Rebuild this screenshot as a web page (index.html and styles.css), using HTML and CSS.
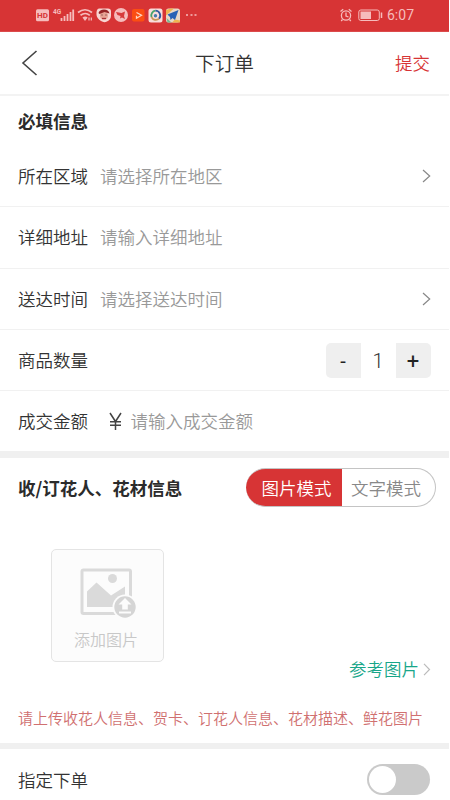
FILE: index.html
```
<!DOCTYPE html>
<html lang="zh-CN">
<head>
<meta charset="utf-8">
<title>下订单</title>
<link rel="stylesheet" href="styles.css">
</head>
<body>
<div class="status">
  <svg class="status-left" width="175" height="31" viewBox="0 0 175 31" fill="none" stroke="#f6bcbc">
    <rect x="11" y="9.200" width="13" height="12" rx="1.500" fill="#f6bcbc" stroke="none"/>
    <text x="12" y="18.300" class="hd">HD</text>
    <text x="28" y="13.500" class="net">4G</text>
    <path d="M36.500 21v-3M39.500 21v-5M42.500 21v-7M45.500 21v-9M48.200 21V9.500" stroke-width="1.800"/>
    <path d="M53 12.500q7-5.500 14 0M55.500 15.300q4.800-3.600 9.300 0" stroke-width="1.700"/>
    <path d="M57.500 17.500q2.700-2 5.200 0L60 21z" fill="#f6bcbc" stroke="none"/>
    <path d="M64 17.500v3M66.300 17.500v3" stroke-width="1.200"/>
    <path d="M74 8.500h9q3 0 3 3v4q0 4-4 6-3 1.500-6-.500-4-2.500-4.500-6-.500-6 2.500-6.500" fill="#f8d5d2" stroke="none"/>
    <circle cx="79" cy="15.500" r="4" fill="#e8a394" stroke="none"/>
    <path d="M73.500 13q1-3.500 5.500-3.500t5.500 4l-5-1.500-5 2z" fill="#952426" stroke="none"/>
    <path d="M76.500 15h1M80.500 15h1" stroke="#51282a"/><path d="M77 18.500h4" stroke="#a93235" stroke-width="1.300"/>
    <circle cx="96" cy="15" r="7" fill="#f6bcbc" stroke="none"/>
    <path d="M91 12l5.500 1 3.500-1.500-1 4.500 1 3-3-1.500-2 1 .500-2.500-3-1z" fill="#d73a3b" stroke="none"/>
    <rect x="107" y="9" width="12.500" height="12.500" rx="2" fill="#fb4e12" stroke="none"/>
    <path d="M111.500 12.500l5 2.700-5 3v-2.500" stroke="#ffd5c4" stroke-width="1.300"/>
    <rect x="123.500" y="8.500" width="14" height="14" rx="2.500" fill="#f9dcda" stroke="none"/>
    <path d="M126.500 17A4.800 4.800 0 0 1 130.500 10.700" stroke="#45a36a" stroke-width="1.800"/>
    <path d="M130.500 10.700a4.800 4.800 0 0 1 3.500 8" stroke="#315aa0" stroke-width="1.800"/>
    <path d="M134 18.700a4.800 4.800 0 0 1-7.500-1.500" stroke="#c79555" stroke-width="1.800"/>
    <circle cx="130.500" cy="15.700" r="1.700" fill="#427bab" stroke="none"/>
    <rect x="141" y="8.500" width="14" height="14" rx="2.500" fill="#e7d7c8" stroke="none"/>
    <path d="M141 10l5-1.500h3l-8 7zM147 22.500l3-3 5 1v2z" fill="#efb44f" stroke="none"/>
    <path d="M141.500 18l5 4.500h-4z" fill="#79b991" stroke="none"/>
    <path d="M142.500 14.500l11-4.500-3.500 10-2.500-2-2 2-.500-3z" fill="#2861b5" stroke="none"/>
    <path d="M161 15h2M165.500 15h2M169.500 15h2" stroke-width="1.700"/>
  </svg>
  <svg class="status-right" width="50" height="31" viewBox="0 0 50 31" fill="none" stroke="#f6bcbc">
    <circle cx="11" cy="15.500" r="4.600" stroke-width="1.300"/>
    <path d="M5.500 11.500l2.700-2.300M13.800 9.200l2.700 2.300M11 12.500V16l2.500 1M7.500 19.500L6.200 21M14.500 19.500l1.300 1.500" stroke-width="1.300"/>
    <rect x="23.800" y="10" width="20.500" height="10.500" rx="2"/>
    <rect x="25.500" y="11.500" width="10.500" height="7.500" fill="#f6bcbc" stroke="none"/>
    <path d="M46.500 12.500v5.500" stroke-width="1.500"/>
  </svg>
  <span class="clock">6:07</span>
</div>
<header class="header">
  <svg class="back" width="18" height="26" viewBox="0 0 18 26"><path d="M15.500 1L2 13l13.500 12"/></svg>
  <h1>下订单</h1>
  <span class="submit">提交</span>
</header>
<section class="required">
  <h2 class="title">必填信息</h2>
  <div class="row"><label>所在区域</label><span class="hint">请选择所在地区</span><svg class="chevron" width="9" height="14" viewBox="0 0 9 14"><path d="M1 1l6.700 6L1 13"/></svg></div>
  <div class="row"><label>详细地址</label><span class="hint">请输入详细地址</span></div>
  <div class="row"><label>送达时间</label><span class="hint">请选择送达时间</span><svg class="chevron" width="9" height="14" viewBox="0 0 9 14"><path d="M1 1l6.700 6L1 13"/></svg></div>
  <div class="row"><label>商品数量</label><div class="stepper"><span class="step minus">-</span><span class="count">1</span><span class="step plus">+</span></div></div>
  <div class="row"><label>成交金额</label><svg class="yen" width="13" height="18" viewBox="0 0 13 18"><path d="M1 1l5.500 8.500L12 1M6.500 9v9M1 9.700h11M1 13.200h11"/></svg><span class="hint">请输入成交金额</span></div>
</section>
<section class="flowers">
  <div class="flowers-head">
    <h2>收/订花人、花材信息</h2>
    <div class="modes"><span class="mode active">图片模式</span><span class="mode">文字模式</span></div>
  </div>
  <div class="upload">
    <svg width="56" height="52" viewBox="0 0 56 52">
      <rect x="2" y="2" width="48.500" height="43.500" rx="1.500" fill="none" stroke="#dadada" stroke-width="3"/>
      <circle cx="32.500" cy="10.500" r="4.500" fill="#dadada"/>
      <path d="M7 39V23.500l9.500-9L31 27.500l14-9V39z" fill="#dadada"/>
      <circle cx="45" cy="39" r="12.500" fill="#fcfcfc"/><circle cx="45" cy="39" r="10.700" fill="#d5d5d5"/>
      <path d="M45 30l6.500 6.500h-3.700v5h-5.600v-5h-3.700zM39 43.500h12v2H39z" fill="#fcfcfc"/>
    </svg>
    <span>添加图片</span>
  </div>
  <div class="reference">参考图片<svg width="8" height="13" viewBox="0 0 8 13"><path d="M1 .8l5.500 5.700L1 12.200"/></svg></div>
  <p class="note">请上传收花人信息、贺卡、订花人信息、花材描述、鲜花图片</p>
</section>
<div class="assign"><label>指定下单</label><span class="switch"><i></i></span></div>
</body>
</html>
```
FILE: styles.css
```
* { box-sizing: border-box; }
body {
  margin: 0;
  width: 449px;
  height: 800px;
  overflow: hidden;
  color: #333;
  font: 17.500px/26px "Noto Sans CJK SC", sans-serif;
  font-weight: 350;
}
html { background: #fff; }
h1, h2, p { margin: 0; }
svg { display: block; flex: none; }
.status { height: 32px; background: #d73435; display: flex; align-items: flex-start; padding-left: 25px; border-bottom: 1px solid #dc4b4c; }
.status-right { margin-left: 135px; }
.clock { margin-left: 2px; font: 14px/31px Roboto, sans-serif; color: #f6bcbc; }
.hd { font: bold 8px Roboto, sans-serif; fill: #d73435; stroke: none; }
.net { font: bold 6.500px Roboto, sans-serif; fill: #f6bcbc; stroke: none; }
.header { height: 64px; display: flex; align-items: center; justify-content: space-between; padding: 0 19px 0 21px; border-bottom: 2px solid #f3f3f3; }
.header h1 { font-size: 19.700px; font-weight: 350; margin-left: 15px; }
.back path { fill: none; stroke: #444; stroke-width: 1.600; }
.submit { color: #d73435; }
.title { height: 50px; padding: 12px 18px; font-size: 17.500px; font-weight: 600; line-height: 26px; color: #2b2b2b; }
.row { height: 61.300px; display: flex; align-items: center; padding: 0 18.500px 0 18px; border-bottom: 1.500px solid #f1f1f1; }
.row:last-child { height: 60px; border-bottom: 0; }
.row label { width: 82px; }
.hint { color: #999; }
.chevron { margin-left: auto; }
.chevron path { fill: none; stroke: #888; stroke-width: 1.200; }
.stepper { margin-left: auto; display: flex; height: 35px; text-align: center; font: 20px/35px Roboto, sans-serif; }
.step { width: 35px; background: #efefef; color: #222; line-height: 37px; }
.minus { border-radius: 5px 0 0 5px; }
.plus { border-radius: 0 5px 5px 0; font-size: 22px; }
.count { width: 35px; line-height: 36px; font-weight: 300; }
.yen { margin: 0 9px 0 8.500px; }
.yen path { fill: none; stroke: #444; stroke-width: 1.500; }
.flowers { height: 298px; border-top: 7px solid #f0f0f0; border-bottom: 6px solid #f0f0f0; }
.flowers-head { display: flex; align-items: center; justify-content: space-between; padding: 10px 13px 0 18px; }
.flowers h2 { font-size: 17.500px; font-weight: 600; color: #2b2b2b; }
.modes { display: flex; width: 190px; height: 39px; border-radius: 20px; overflow: hidden; border: 1.500px solid #c4c4c4; border-left: 0; background: linear-gradient(#d73435, #d73435) left / 96px 100% no-repeat border-box; }
.mode { width: 93px; color: #888; line-height: 37px; padding-left: 9px; }
.mode.active { width: 96px; color: #fff; padding-left: 15.500px; }
.upload { width: 113px; height: 113px; margin: 42px 0 0 50.500px; padding-top: 18px; border: 1px solid #e4e4e4; border-radius: 5px; background: #fcfcfc; color: #c8c8c8; font-size: 16px; display: flex; flex-direction: column; align-items: center; }
.upload span { line-height: 24px; margin: 7px 2px 0 0; }
.upload svg { margin-left: 2px; }
.reference { height: 26px; margin-top: -6px; padding-right: 18px; display: flex; align-items: center; justify-content: flex-end; gap: 4px; color: #18a689; }
.reference path { fill: none; stroke: #bbb; stroke-width: 1.200; }
.note { padding-left: 18px; margin-top: 25px; font-size: 15px; line-height: 22px; color: #d07070; white-space: nowrap; }
.assign { height: 61px; display: flex; align-items: center; justify-content: space-between; padding: 0 19px 0 18px; }
.switch { width: 63px; height: 31px; border-radius: 16px; background: #cacaca; padding: 2px; }
.switch i { display: block; width: 27px; height: 27px; border-radius: 50%; background: #fff; }
```
